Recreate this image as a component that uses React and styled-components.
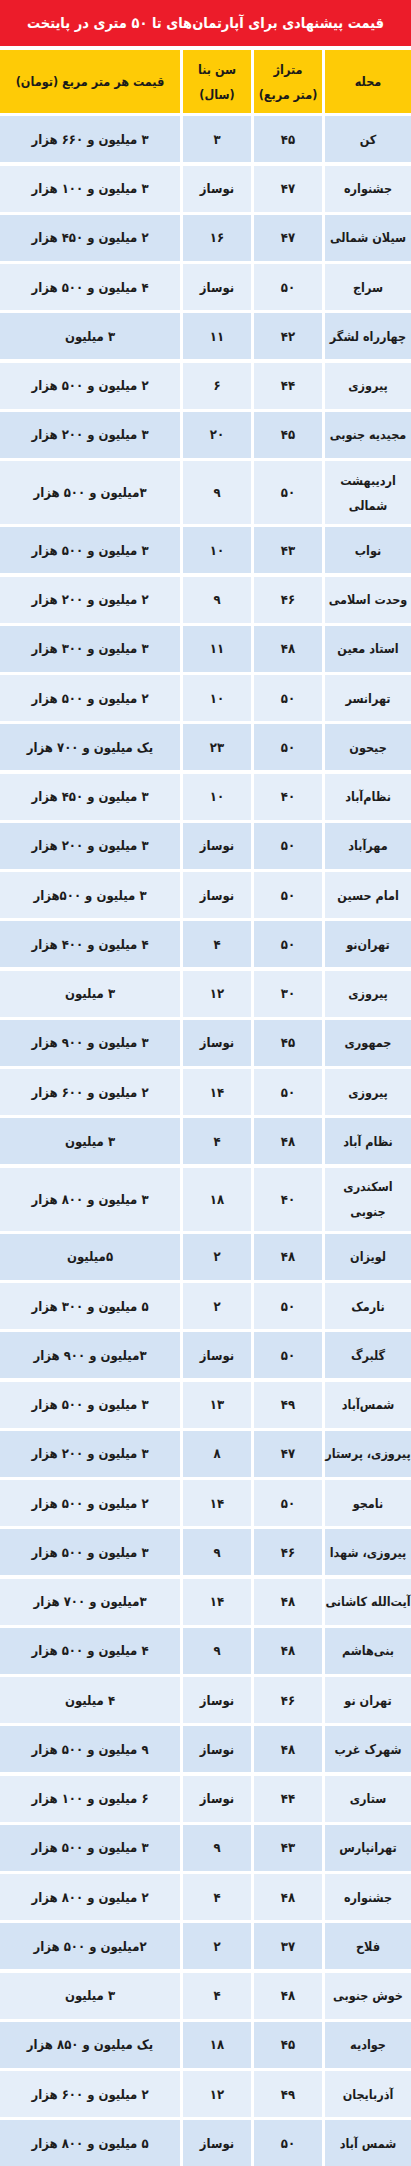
import React from "react";
import styled, { createGlobalStyle } from "styled-components";

const GlobalStyle = createGlobalStyle`
  html, body {
    margin: 0;
    padding: 0;
    background: #ffffff;
  }
  body {
    font-family: "DejaVu Sans", "Noto Sans", sans-serif;
    font-stretch: semi-condensed;
  }
`;

const Page = styled.div`
  width: 411px;
  direction: rtl;
  background: #ffffff;
  display: flex;
  flex-direction: column;
  gap: 4px;
`;

const Title = styled.div`
  height: 46px;
  background: #ec1c2a;
  color: #ffffff;
  font-weight: bold;
  font-size: 14.5px;
  display: flex;
  align-items: center;
  justify-content: center;
`;

const Table = styled.div`
  display: grid;
  grid-template-columns: 86px 68px 68px 180px;
  column-gap: 3px;
  row-gap: 3.25px;
`;

const HeadCell = styled.div`
  height: 63px;
  background: #fecb06;
  color: #1a1a1a;
  font-weight: bold;
  font-size: 12.5px;
  line-height: 25px;
  display: flex;
  align-items: center;
  justify-content: center;
  text-align: center;
  padding: 0 2px;
  white-space: nowrap;
`;

const Cell = styled.div`
  height: ${(p) => (p.$tall ? "63px" : "46px")};
  background: ${(p) => (p.$odd ? "#d4e3f4" : "#e5eef9")};
  color: #1c1c1c;
  font-size: ${(p) => (p.$name ? "12.5px" : "13px")};
  font-weight: 600;
  line-height: 25px;
  display: flex;
  align-items: center;
  justify-content: center;
  text-align: center;
  padding: 0 1px;
  white-space: ${(p) => (p.$tall ? "normal" : "nowrap")};
`;

const rows = [
  ["کن", "۴۵", "۳", "۳ میلیون و ۶۶۰ هزار"],
  ["جشنواره", "۴۷", "نوساز", "۳ میلیون و ۱۰۰ هزار"],
  ["سیلان شمالی", "۴۷", "۱۶", "۲ میلیون و ۴۵۰ هزار"],
  ["سراج", "۵۰", "نوساز", "۴ میلیون و ۵۰۰ هزار"],
  ["چهارراه لشگر", "۴۲", "۱۱", "۳ میلیون"],
  ["پیروزی", "۴۴", "۶", "۲ میلیون و ۵۰۰ هزار"],
  ["مجیدیه جنوبی", "۴۵", "۲۰", "۳ میلیون و ۲۰۰ هزار"],
  ["اردیبهشت شمالی", "۵۰", "۹", "۳میلیون و ۵۰۰ هزار", true],
  ["نواب", "۴۳", "۱۰", "۳ میلیون و ۵۰۰ هزار"],
  ["وحدت اسلامی", "۴۶", "۹", "۲ میلیون و ۲۰۰ هزار"],
  ["استاد معین", "۴۸", "۱۱", "۳ میلیون و ۳۰۰ هزار"],
  ["تهرانسر", "۵۰", "۱۰", "۲ میلیون و ۵۰۰ هزار"],
  ["جیحون", "۵۰", "۲۳", "یک میلیون و ۷۰۰ هزار"],
  ["نظام‌آباد", "۴۰", "۱۰", "۳ میلیون و ۴۵۰ هزار"],
  ["مهرآباد", "۵۰", "نوساز", "۳ میلیون و ۲۰۰ هزار"],
  ["امام حسین", "۵۰", "نوساز", "۳ میلیون و ۵۰۰هزار"],
  ["تهران‌نو", "۵۰", "۴", "۴ میلیون و ۴۰۰ هزار"],
  ["پیروزی", "۳۰", "۱۲", "۳ میلیون"],
  ["جمهوری", "۴۵", "نوساز", "۳ میلیون و ۹۰۰ هزار"],
  ["پیروزی", "۵۰", "۱۴", "۲ میلیون و ۶۰۰ هزار"],
  ["نظام آباد", "۴۸", "۴", "۳ میلیون"],
  ["اسکندری جنوبی", "۴۰", "۱۸", "۳ میلیون و ۸۰۰ هزار", true],
  ["لویزان", "۴۸", "۲", "۵میلیون"],
  ["نارمک", "۵۰", "۲", "۵ میلیون و ۳۰۰ هزار"],
  ["گلبرگ", "۵۰", "نوساز", "۳میلیون و ۹۰۰ هزار"],
  ["شمس‌آباد", "۴۹", "۱۳", "۳ میلیون و ۵۰۰ هزار"],
  ["پیروزی، پرستار", "۴۷", "۸", "۳ میلیون و ۲۰۰ هزار"],
  ["نامجو", "۵۰", "۱۴", "۲ میلیون و ۵۰۰ هزار"],
  ["پیروزی، شهدا", "۴۶", "۹", "۳ میلیون و ۵۰۰ هزار"],
  ["آیت‌الله کاشانی", "۴۸", "۱۴", "۳میلیون و ۷۰۰ هزار"],
  ["بنی‌هاشم", "۴۸", "۹", "۴ میلیون و ۵۰۰ هزار"],
  ["تهران نو", "۴۶", "نوساز", "۴ میلیون"],
  ["شهرک غرب", "۴۸", "نوساز", "۹ میلیون و ۵۰۰ هزار"],
  ["ستاری", "۴۴", "نوساز", "۶ میلیون و ۱۰۰ هزار"],
  ["تهرانپارس", "۴۳", "۹", "۳ میلیون و ۵۰۰ هزار"],
  ["جشنواره", "۴۸", "۴", "۲ میلیون و ۸۰۰ هزار"],
  ["فلاح", "۳۷", "۲", "۲میلیون و ۵۰۰ هزار"],
  ["خوش جنوبی", "۴۸", "۴", "۳ میلیون"],
  ["جوادیه", "۴۵", "۱۸", "یک میلیون و ۸۵۰ هزار"],
  ["آذربایجان", "۴۹", "۱۲", "۲ میلیون و ۶۰۰ هزار"],
  ["شمس آباد", "۵۰", "نوساز", "۵ میلیون و ۸۰۰ هزار"],
];

export default function App() {
  return (
    <>
      <GlobalStyle />
      <Page>
        <Title>قیمت پیشنهادی برای آپارتمان‌های تا ۵۰ متری در پایتخت</Title>
        <Table>
          <HeadCell>محله</HeadCell>
          <HeadCell>
            متراژ
            <br />
            (متر مربع)
          </HeadCell>
          <HeadCell>
            سن بنا
            <br />
            (سال)
          </HeadCell>
          <HeadCell>قیمت هر متر مربع (تومان)</HeadCell>
          {rows.map((r, i) => {
            const odd = i % 2 === 0;
            const tall = !!r[4];
            return (
              <React.Fragment key={i}>
                <Cell $odd={odd} $tall={tall} $name>{r[0]}</Cell>
                <Cell $odd={odd} $tall={tall}>{r[1]}</Cell>
                <Cell $odd={odd} $tall={tall}>{r[2]}</Cell>
                <Cell $odd={odd} $tall={tall}>{r[3]}</Cell>
              </React.Fragment>
            );
          })}
        </Table>
      </Page>
    </>
  );
}
